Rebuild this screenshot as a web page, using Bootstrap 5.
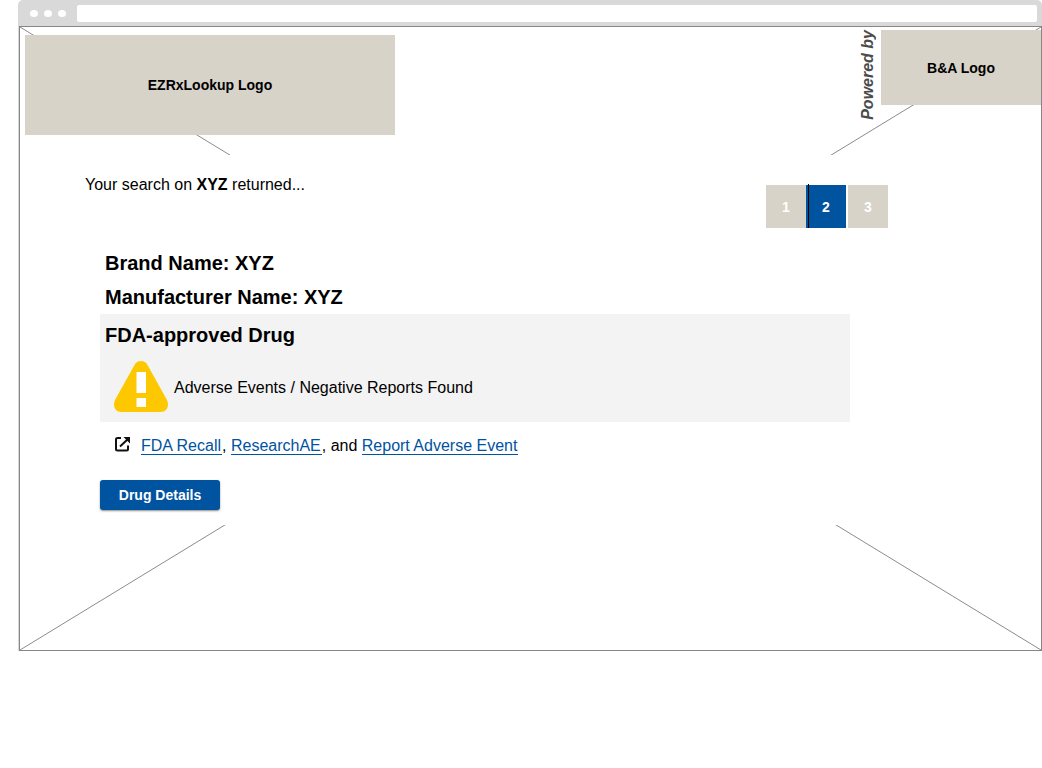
<!DOCTYPE html>
<html lang="en">
<head>
<meta charset="utf-8">
<meta name="viewport" content="width=device-width, initial-scale=1">
<title>EZRxLookup – Search results</title>
<link href="https://cdn.jsdelivr.net/npm/bootstrap@5.3.0/dist/css/bootstrap.min.css" rel="stylesheet">
<style>
  body { font-family: "Liberation Sans", Arial, sans-serif; font-size: 16px; line-height: 24px; color: #000; background: #fff; }
  .browser { margin-left: 18px; }
  .chrome-bar { height: 26px; padding: 0 5px 0 12px; background: #d9d9d9; border-radius: 5px 5px 0 0; }
  .dots { gap: 6px; margin-right: 11px; }
  .dots span { width: 8px; height: 7px; border-radius: 50%; background: #fff; }
  .address { height: 17px; min-width: 0; border: 0; border-radius: 2px; background: #fff; font-size: 12px; }
  .page-frame { border-left: 1px solid #d9d9d9; }
  .canvas { border: 1px solid #868686; padding-bottom: 125px; }
  .cross { inset: 0; pointer-events: none; }
  .site-head { height: 128px; }
  .logo-box { background: #d7d3c8; font-size: 14px; font-weight: 700; color: #000; }
  .logo-main { width: 370px; height: 100px; margin: 8px 0 0 5px; }
  .logo-partner { width: 160px; height: 75px; margin-top: 3px; }
  .powered { writing-mode: vertical-rl; transform: rotate(180deg); font-size: 16px; line-height: 24px; font-weight: 700; font-style: italic; color: #4b4b4b; margin: 3px 1px 0 0; }
  .results { background: #fff; padding: 18px 153px 15px 65px; }
  .pager { margin: 12px 0 18px; }
  .pager .page-no { width: 40px; height: 43px; background: #d7d3c8; color: #fff; font-size: 14px; font-weight: 700; text-decoration: none; }
  .pager .page-no.current { background: #00539f; margin-right: 2px; }
  .pager .current::before { content: ""; position: absolute; left: 2px; top: -1px; bottom: 0; width: 1px; background: #000; }
  .result-item { max-width: 750px; margin: 0 -115px 0 15px; }
  .result-item h2 { font-size: 20px; line-height: 34px; font-weight: 700; margin: 0; padding-left: 5px; }
  .status { background: #f3f3f3; padding: 4px 0 9px; }
  .warning { gap: 5px; padding: 8px 0 0 13px; }
  .warning span { padding-top: 3px; }
  .links { gap: 10px; padding: 12px 0 0 14px; margin-bottom: 22px; }
  .links svg { margin-bottom: 4px; }
  .links a { display: inline-block; line-height: 17px; padding-right: 1px; color: #00539f; text-decoration: none; border-bottom: 1px solid #00539f; }
  .btn-details { width: 120px; height: 30px; padding: 0; border: 0; border-radius: 3px; font-size: 14px; line-height: 30px; font-weight: 700; color: #fff; background: #00539f; box-shadow: 0 1px 2px rgba(0,0,0,.45); }
  .btn-details:hover { background: #00457f; color: #fff; }
</style>
</head>
<body>
<div class="browser">
  <div class="chrome-bar d-flex align-items-center">
    <div class="dots d-flex" aria-hidden="true"><span></span><span></span><span></span></div>
    <input class="address flex-grow-1" type="text" aria-label="Address">
  </div>
  <div class="page-frame">
    <div class="canvas position-relative">
      <svg class="cross position-absolute w-100 h-100" stroke="#8c8c8c" stroke-width="1" aria-hidden="true">
        <line x1="0" y1="0" x2="100%" y2="100%"/>
        <line x1="0" y1="100%" x2="100%" y2="0"/>
      </svg>
      <header class="site-head position-relative d-flex justify-content-between align-items-start">
        <div class="logo-box logo-main d-flex align-items-center justify-content-center">EZRxLookup Logo</div>
        <div class="d-flex align-items-start">
          <div class="powered">Powered by</div>
          <div class="logo-box logo-partner d-flex align-items-center justify-content-center">B&amp;A Logo</div>
        </div>
      </header>
      <main class="results position-relative">
        <div class="d-flex justify-content-between align-items-start">
          <p class="mb-0">Your search on <strong>XYZ</strong> returned...</p>
          <nav class="pager d-flex" aria-label="Result pages">
            <a class="page-no d-flex align-items-center justify-content-center" href="#">1</a>
            <a class="page-no current position-relative d-flex align-items-center justify-content-center" href="#" aria-current="page">2</a>
            <a class="page-no d-flex align-items-center justify-content-center" href="#">3</a>
          </nav>
        </div>
        <article class="result-item">
          <h2>Brand Name: XYZ</h2>
          <h2>Manufacturer Name: XYZ</h2>
          <div class="status">
            <h2>FDA-approved Drug</h2>
            <div class="warning d-flex align-items-center">
              <svg width="56" height="53" viewBox="0 0 56 53" aria-hidden="true">
                <path d="M28 1C25 1 23 2.500 21.500 5L2 40C-.500 46 2 52 8.500 52H47.500C54 52 56.500 46 54 40L34.500 5C33 2.500 31 1 28 1Z" fill="#fdc800"/>
                <path d="M23.500 12H33V33H23.500ZM23.500 38H33V47H23.500Z" fill="#fff"/>
              </svg>
              <span>Adverse Events / Negative Reports Found</span>
            </div>
          </div>
          <div class="links d-flex align-items-center">
            <svg width="17" height="17" viewBox="0 0 17 17" fill="none" stroke="#111" stroke-width="2" aria-hidden="true">
              <path d="M7 2H3.500Q2 2 2 3.500V13Q2 14.500 3.500 14.500H12.500Q14 14.500 14 13V9.500"/>
              <path d="M6 10.500L14 3"/>
              <path d="M9.500 1H16V7.500Z" fill="#111" stroke="none"/>
            </svg>
            <span><a href="#">FDA Recall</a>, <a href="#">ResearchAE</a>, and <a href="#">Report Adverse Event</a></span>
          </div>
          <button type="button" class="btn btn-details d-block">Drug Details</button>
        </article>
      </main>
    </div>
  </div>
</div>
<script src="https://cdn.jsdelivr.net/npm/bootstrap@5.3.0/dist/js/bootstrap.bundle.min.js"></script>
</body>
</html>
